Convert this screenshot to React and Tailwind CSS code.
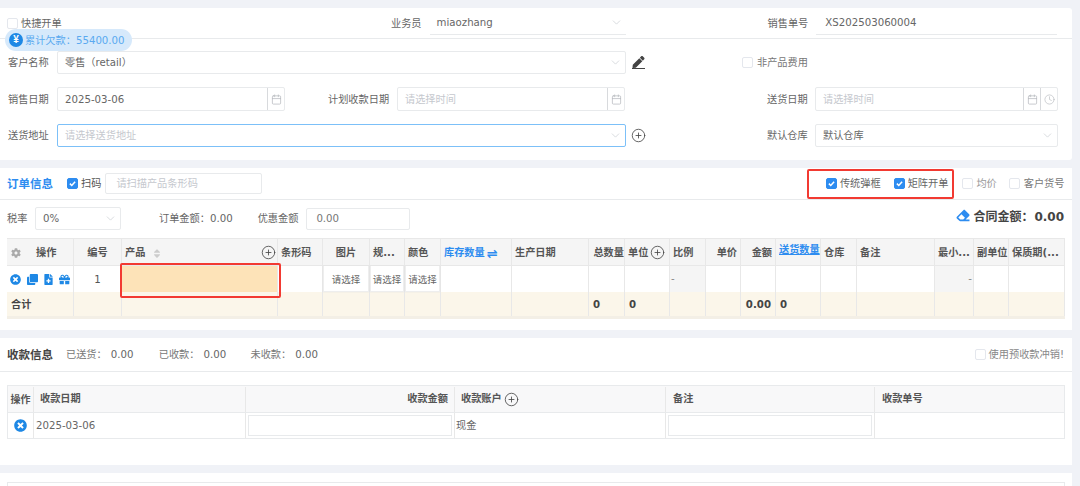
import { Calendar, ChevronDown, CirclePlus, Clock } from 'lucide-react';
import { FaTimesCircle, FaClone, FaFileMedical, FaGift, FaEraser, FaCog, FaSort, FaPen } from 'react-icons/fa';

const FONT = "font-['DejaVu_Sans','Noto_Sans_CJK_SC',sans-serif]";
const COLS = 'grid-cols-[67px_48px_156px_45px_47px_35px_36px_71px_77px_36px_45px_36px_35px_35px_45px_36px_78px_39px_35px_56px]';

function Check({ on, className = '' }) {
  return (
    <span className={`flex h-[11px] w-[11px] shrink-0 items-center justify-center rounded-[2px] border ${on ? 'border-[#2d8cf0] bg-[#2d8cf0]' : 'border-[#e4e7ed] bg-white'} ${className}`}>
      {on && (
        <svg viewBox="0 0 12 12" className="h-[9px] w-[9px]" fill="none" stroke="white" strokeWidth="2">
          <path d="M2.5 6.2 5 8.6l4.5-5" />
        </svg>
      )}
    </span>
  );
}

function Plus({ className = '' }) {
  return <CirclePlus className={`h-[15px] w-[15px] shrink-0 text-[#444] ${className}`} strokeWidth={1.3} />;
}

function Select({ value, placeholder, className = '', focus }) {
  return (
    <div className={`flex h-[23px] items-center justify-between rounded-[2px] border bg-white pl-[7px] pr-[3px] ${focus ? 'border-[#7cc0f8]' : 'border-[#e8eaec]'} ${className}`}>
      {value ? <span className="pt-[2px] text-[#666]">{value}</span> : <span className="pt-[2px] text-[#c5c8ce]">{placeholder}</span>}
      <ChevronDown className="h-[13px] w-[13px] text-[#c5c8ce]" strokeWidth={1.2} />
    </div>
  );
}

function DateInput({ value, className = '', time }) {
  return (
    <div className={`flex h-[24px] items-stretch rounded-[2px] border border-[#e8eaec] bg-white ${className}`}>
      <div className="flex flex-1 items-center pl-[7px] pt-[2px]">
        {value ? <span className="text-[#666]">{value}</span> : <span className="text-[#c5c8ce]">请选择时间</span>}
      </div>
      <span className="flex w-[17px] items-center justify-center border-l border-[#d8dadd]">
        <Calendar className="h-[11px] w-[11px] text-[#b5b8bd]" strokeWidth={1.6} />
      </span>
      {time && (
        <span className="flex w-[17px] items-center justify-center border-l border-[#d8dadd]">
          <Clock className="h-[11px] w-[11px] text-[#b5b8bd]" strokeWidth={1.4} />
        </span>
      )}
    </div>
  );
}

// 文字统一下移一点，和参考图的基线对齐
function Label({ children, className = '', color = 'text-[#666]' }) {
  return <span className={`shrink-0 whitespace-nowrap pt-[2px] ${color} ${className}`}>{children}</span>;
}

function Th({ children, className = '', color = 'text-[#555]' }) {
  return (
    <div className={`flex min-w-0 items-center overflow-hidden whitespace-nowrap border-r border-[#e8e8e8] px-[3px] pt-[2px] font-bold ${color} ${className}`}>
      {children}
    </div>
  );
}

function Td({ children, className = '' }) {
  return <div className={`flex min-w-0 items-center border-r border-[#e8e8e8] ${className}`}>{children}</div>;
}

function Pick() {
  return (
    <div className="flex h-full w-full items-center justify-center border-x border-b border-[#eee] pt-[2px] text-[9.5px] text-[#666] shadow-[0_0_1px_#ddd]">请选择</div>
  );
}

function OrderTable() {
  const sum = { 9: '0', 10: '0', 13: '0.00', 14: '0' };
  return (
    <div className="ml-[7px] mt-[8px] w-[1058px] border-t border-[#e8e8e8]">
      <div className={`grid h-[27px] ${COLS} border-b border-[#e8e8e8] bg-[#f5f5f5]`}>
        <Th>
          <FaCog className="ml-[1px] h-[10px] w-[10px] text-[#aaa]" />
          <span className="ml-[15px]">操作</span>
        </Th>
        <Th className="justify-center">编号</Th>
        <Th className="justify-between !pr-[1px]">
          <span className="flex items-center gap-[8px]">
            产品
            <FaSort className="h-[11px] w-[8px] text-[#ccc]" />
          </span>
          <Plus className="-mt-[2px]" />
        </Th>
        <Th>条形码</Th>
        <Th className="justify-center">图片</Th>
        <Th>规...</Th>
        <Th>颜色</Th>
        <Th className="gap-[2px]" color="text-[#2d8cf0]">
          库存数量<span className="text-[13px] leading-none">⇌</span>
        </Th>
        <Th>生产日期</Th>
        <Th className="justify-end !px-0">总数量</Th>
        <Th className="gap-[2px]">
          单位
          <Plus className="-mt-[2px]" />
        </Th>
        <Th>比例</Th>
        <Th className="justify-end">单价</Th>
        <Th className="justify-end">金额</Th>
        <Th className="!items-start !pt-[6px] underline" color="text-[#2d8cf0]">送货数量</Th>
        <Th>仓库</Th>
        <Th>备注</Th>
        <Th>最小...</Th>
        <Th>副单位</Th>
        <Th>保质期(...</Th>
      </div>
      <div className={`grid h-[26px] ${COLS} bg-white`}>
        <Td className="gap-[6px] pl-[3px] text-[#1e88e5]">
          <FaTimesCircle className="h-[11px] w-[11px]" />
          <FaClone className="h-[11px] w-[11px]" />
          <FaFileMedical className="h-[11px] w-[9px]" />
          <FaGift className="h-[11px] w-[11px]" />
        </Td>
        <Td className="justify-center pt-[2px] text-[#555]">1</Td>
        <Td className="relative bg-[#fde3b8]">
          <span className="absolute -left-[2px] -right-[4px] -top-[3px] -bottom-[6px] rounded-[2px] border-2 border-[#f23a32]" />
        </Td>
        <Td />
        <Td><Pick /></Td>
        <Td><Pick /></Td>
        <Td><Pick /></Td>
        <Td />
        <Td />
        <Td />
        <Td />
        <Td className="bg-[#f5f5f5] pl-[1px] text-[#888]">-</Td>
        <Td />
        <Td />
        <Td />
        <Td />
        <Td />
        <Td className="justify-end bg-[#f5f5f5] pr-[1px] text-[#888]">-</Td>
        <Td />
        <Td />
      </div>
      <div className={`grid h-[27px] ${COLS} border-b-[3px] border-[#f3efe6] bg-[#fbf6ea]`}>
        {Array.from({ length: 20 }, (_, i) => (
          <Td key={i} className={`px-[4px] pt-[2px] font-bold text-[#444] ${i === 13 ? 'justify-end' : ''}`}>
            {i === 0 ? '合计' : sum[i]}
          </Td>
        ))}
      </div>
    </div>
  );
}

function PayTable() {
  const cols = 'grid-cols-[26px_212px_209px_211px_209px_191px]';
  return (
    <div className="ml-[7px] mt-[13px] w-[1058px] border border-[#e8eaec]">
      <div className={`grid h-[27px] ${cols} border-b border-[#e8eaec] bg-[#f8f8f9] pt-[1px] font-bold text-[#555]`}>
        <Td className="justify-center text-[10px]">操作</Td>
        <Td className="px-[6px]">收款日期</Td>
        <Td className="justify-end px-[6px]">收款金额</Td>
        <Td className="gap-[2px] px-[6px]">
          收款账户
          <Plus className="-mt-[1px]" />
        </Td>
        <Td className="px-[7px]">备注</Td>
        <div className="flex items-center px-[7px]">收款单号</div>
      </div>
      <div className={`grid h-[25px] ${cols} text-[#666]`}>
        <Td className="justify-center">
          <FaTimesCircle className="h-[13px] w-[13px] text-[#1e88e5]" />
        </Td>
        <Td className="px-[2px] pt-[2px]">2025-03-06</Td>
        <Td className="px-[2px] py-[2px]">
          <div className="h-full w-full border border-[#e8eaec]" />
        </Td>
        <Td className="px-[1px] pt-[2px]">现金</Td>
        <Td className="px-[2px] py-[2px]">
          <div className="h-full w-full border border-[#e8eaec]" />
        </Td>
        <div />
      </div>
    </div>
  );
}

export default function App() {
  return (
    <div className={`h-[486px] w-[1080px] overflow-hidden bg-[#f0f2f7] pt-[8px] text-[10.2px] leading-none ${FONT}`}>
      {/* 基本信息 */}
      <section className="relative h-[152px] w-[1072px] rounded-r-[3px] bg-white">
        <div className="flex h-[31px] items-center border-b border-[#e8eaec] pl-[7px]">
          <Check />
          <Label className="ml-[3px] w-[370px]">快捷开单</Label>
          <Label>业务员</Label>
          <div className="ml-[8px] flex h-[24px] w-[196px] items-center justify-between border-b border-[#e8eaec] pl-[7px] pr-[3px] text-[#666]">
            <span className="pt-[2px]">miaozhang</span>
            <ChevronDown className="h-[13px] w-[13px] text-[#c5c8ce]" strokeWidth={1.2} />
          </div>
          <Label className="ml-[142px]">销售单号</Label>
          <div className="ml-[8px] flex h-[24px] w-[241px] items-center border-b border-[#e8eaec] pl-[9px] pt-[2px] text-[#666]">XS202503060004</div>
        </div>

        <div className="absolute left-[5px] top-[21px] flex h-[22px] w-[127px] items-center gap-[2px] rounded-full bg-[#d6e9fb] pl-[4px] text-[#5aa9f0]">
          <span className="flex h-[14px] w-[14px] items-center justify-center rounded-full bg-[#1e88e5] font-['Liberation_Sans',sans-serif] text-[10px] font-bold text-white">¥</span>
          <span className="pt-[2px]">累计欠款：55400.00</span>
        </div>

        <div className="mt-[12px] flex items-center pl-[8px]">
          <Label className="w-[41px]">客户名称</Label>
          <Select value="零售（retail）" className="ml-[8px] w-[569px]" />
          <FaPen className="ml-[6px] h-[13px] w-[13px] border-b border-[#444] text-[#444]" />
          <Check className="ml-[97px]" />
          <Label className="ml-[4px]" color="text-[#777]">非产品费用</Label>
        </div>

        <div className="mt-[13px] flex items-center pl-[8px]">
          <Label className="w-[41px]">销售日期</Label>
          <DateInput value="2025-03-06" className="ml-[8px] w-[228px]" />
          <Label className="ml-[43px] w-[61px]">计划收款日期</Label>
          <DateInput className="ml-[8px] w-[228px]" />
          <Label className="ml-[142px] w-[40px]">送货日期</Label>
          <DateInput time className="ml-[8px] w-[243px]" />
        </div>

        <div className="mt-[13px] flex items-center pl-[8px]">
          <Label className="w-[41px]">送货地址</Label>
          <Select placeholder="请选择送货地址" focus className="ml-[8px] w-[569px]" />
          <Plus className="ml-[5px]" />
          <Label className="ml-[121px] w-[40px]">默认仓库</Label>
          <Select value="默认仓库" className="ml-[8px] w-[243px]" />
        </div>
      </section>

      {/* 订单信息 */}
      <section className="mt-[8px] h-[162px] w-[1072px] bg-white">
        <div className="flex h-[32px] items-center border-b border-[#e8eaec] pl-[7px]">
          <Label className="w-[60px] text-[11.5px] font-bold" color="text-[#2d8cf0]">订单信息</Label>
          <Check on />
          <Label className="ml-[3px]" color="text-[#555]">扫码</Label>
          <div className="ml-[4px] flex h-[21px] w-[157px] items-center rounded-[2px] border border-[#e8eaec] pl-[10px] pt-[2px] text-[#c5c8ce]">请扫描产品条形码</div>
          <div className="ml-[545px] flex h-[30px] w-[147px] items-center justify-end gap-[3px] rounded-[2px] border-2 border-[#f23a32] pr-[2px]">
            <Check on />
            <Label className="mr-[10px]">传统弹框</Label>
            <Check on />
            <Label className="mr-[2px]">矩阵开单</Label>
          </div>
          <Check className="ml-[8px]" />
          <Label className="ml-[3px]" color="text-[#999]">均价</Label>
          <Check className="ml-[12px]" />
          <Label className="ml-[4px]" color="text-[#777]">客户货号</Label>
        </div>

        <div className="mt-[7px] flex items-center pl-[7px]">
          <Label className="w-[20px]">税率</Label>
          <Select value="0%" className="ml-[8px] w-[86px]" />
          <Label className="ml-[38px]">订单金额：0.00</Label>
          <Label className="ml-[25px]">优惠金额</Label>
          <div className="ml-[8px] flex h-[22px] w-[104px] items-center rounded-[2px] border border-[#e8eaec] pl-[9px] pt-[2px] text-[#777]">0.00</div>
          <FaEraser className="mb-[6px] ml-[546px] h-[13px] w-[14px] text-[#2d8cf0]" />
          <Label className="mb-[6px] ml-[3px] text-[12px] font-bold" color="text-[#444]">合同金额：</Label>
          <Label className="mb-[6px] ml-[1px] text-[12px] font-bold" color="text-[#444]">0.00</Label>
        </div>

        <OrderTable />
      </section>

      {/* 收款信息 */}
      <section className="mt-[8px] h-[127px] w-[1072px] bg-white">
        <div className="flex h-[34px] items-center border-b border-[#e8eaec] pl-[7px]">
          <Label className="w-[59px] text-[11.5px] font-bold" color="text-[#444]">收款信息</Label>
          <Label color="text-[#777]">已送货：</Label>
          <Label className="ml-[4px] w-[48px]">0.00</Label>
          <Label color="text-[#777]">已收款：</Label>
          <Label className="ml-[4px] w-[47px]">0.00</Label>
          <Label color="text-[#777]">未收款：</Label>
          <Label className="ml-[4px]">0.00</Label>
          <Check className="ml-auto" />
          <Label className="ml-[3px] mr-[8px]" color="text-[#888]">使用预收款冲销!</Label>
        </div>
        <PayTable />
      </section>

      <section className="mt-[8px] h-[20px] w-[1072px] bg-white pl-[7px] pt-[9px]">
        <div className="h-full w-[1058px] border border-[#e8eaec]" />
      </section>
    </div>
  );
}
